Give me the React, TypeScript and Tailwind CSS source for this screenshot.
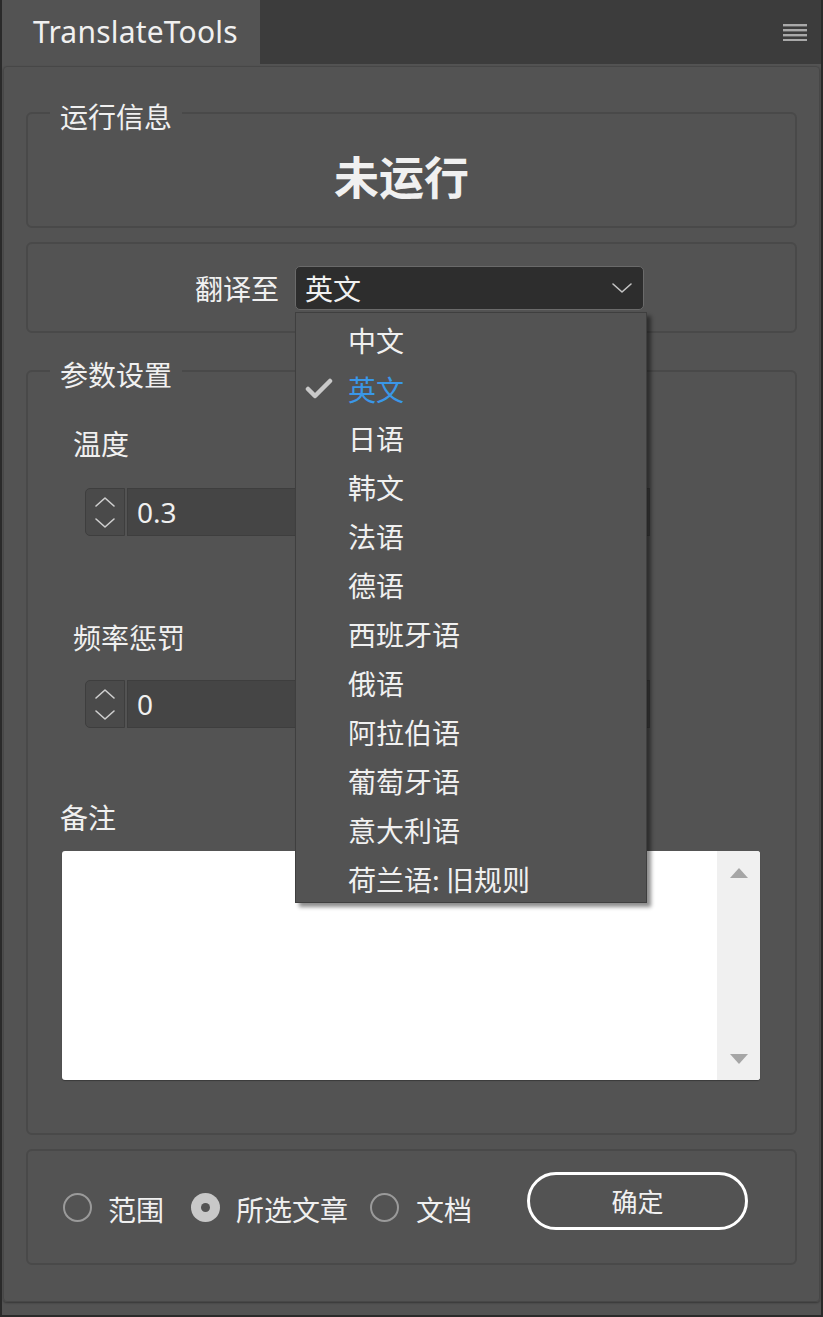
import React from "react"

const languages = [
  "中文",
  "英文",
  "日语",
  "韩文",
  "法语",
  "德语",
  "西班牙语",
  "俄语",
  "阿拉伯语",
  "葡萄牙语",
  "意大利语",
  "荷兰语: 旧规则",
]

function Chevron({ up = false }: { up?: boolean }) {
  return (
    <svg width="22" height="12" viewBox="0 0 22 12" fill="none">
      <path
        d={up ? "M2 10 L11 2 L20 10" : "M2 2 L11 10 L20 2"}
        stroke="#cfcfcf"
        strokeWidth="1.6"
        strokeLinecap="round"
        strokeLinejoin="round"
      />
    </svg>
  )
}

function Spinner({ value }: { value: string }) {
  return (
    <div className="flex h-[48px] ml-[25px]">
      <div className="w-[40px] flex flex-col items-center justify-center gap-[9px] bg-[#4a4a4a] border border-[#3e3e3e] rounded-l-[5px]">
        <Chevron up />
        <Chevron />
      </div>
      <div className="ml-[2px] w-[523px] flex items-center pl-[9px] bg-[#454545] border border-[#3e3e3e] text-[28px] leading-none font-['Noto_Sans','Noto_Sans_CJK_SC',sans-serif]">
        {value}
      </div>
    </div>
  )
}

function Radio({ checked = false }: { checked?: boolean }) {
  return checked ? (
    <span className="shrink-0 w-[29px] h-[29px] rounded-full bg-[#c8c8c8] flex items-center justify-center">
      <span className="w-[9px] h-[9px] rounded-full bg-[#535353]" />
    </span>
  ) : (
    <span className="shrink-0 block w-[29px] h-[29px] rounded-full border-2 border-[#9a9a9a]" />
  )
}

function Legend({ children, className = "" }: { children: React.ReactNode; className?: string }) {
  return (
    <legend className={`px-[10px] text-[28px] leading-[28px] ${className}`}>
      <span className="relative top-[3px]">{children}</span>
    </legend>
  )
}

export default function App() {
  return (
    <div className="w-[823px] h-[1317px] bg-[#535353] border-x-2 border-b-2 border-[#2a2a2a] flex flex-col overflow-hidden text-[#f0f0f0] font-['Noto_Sans_CJK_SC','Noto_Sans',sans-serif]">
      {/* header */}
      <div className="h-[64px] flex bg-[#3c3c3c] shrink-0">
        <div className="w-[258px] bg-[#535353] flex items-center pl-[31px] text-[30px] tracking-[0.2px] leading-none font-['Noto_Sans',sans-serif]">
          TranslateTools
        </div>
        <div className="flex-1 flex justify-end items-center pr-[14px]">
          <svg width="24" height="18" viewBox="0 0 24 18">
            <rect x="0" y="1" width="24" height="2.4" fill="#a9a9a9" />
            <rect x="0" y="6" width="24" height="2.4" fill="#a9a9a9" />
            <rect x="0" y="11" width="24" height="2.4" fill="#a9a9a9" />
            <rect x="0" y="16" width="24" height="2" fill="#a9a9a9" />
          </svg>
        </div>
      </div>

      {/* panel */}
      <div className="mt-[2px] mx-[1px] h-[1236px] border border-[#474747] rounded-[4px] px-[22px] pt-[32px] shadow-[0_1px_2px_rgba(0,0,0,0.35)]">
        {/* 运行信息 */}
        <fieldset className="border-2 border-[#494949] rounded-[6px]">
          <Legend className="ml-[22px]">运行信息</Legend>
          <div className="h-[99px] flex items-center justify-center pb-[2px] pr-[20px]">
            <span className="text-[45px] font-bold leading-none">未运行</span>
          </div>
        </fieldset>

        {/* 翻译至 */}
        <div className="mt-[14px] h-[91px] border-2 border-[#494949] rounded-[6px] flex items-center pl-[167px]">
          <span className="text-[28px] leading-none">翻译至</span>
          <div className="relative ml-[16px] w-[349px] h-[44px]">
            <div className="h-full flex items-center justify-between pl-[9px] pr-[10px] bg-[#2d2d2d] border border-[#6a6a6a] rounded-[5px]">
              <span className="text-[28px] leading-none">英文</span>
              <svg width="22" height="12" viewBox="0 0 22 12" fill="none">
                <path d="M2 2 L11 10 L20 2" stroke="#c4c4c4" strokeWidth="1.6" strokeLinecap="round" strokeLinejoin="round" />
              </svg>
            </div>

            {/* open menu */}
            <div className="absolute z-10 top-[46px] left-0 w-[352px] h-[591px] pt-[3px] bg-[#535353] border border-[#3f3f3f] shadow-[4px_4px_4px_rgba(0,0,0,0.45)]">
              {languages.map((lang) => (
                <div key={lang} className="h-[49px] flex items-center">
                  <div className="w-[52px] flex justify-center pr-[6px]">
                    {lang === "英文" && (
                      <svg width="28" height="22" viewBox="0 0 28 22" fill="none">
                        <path d="M3 11 L10 18 L25 3" stroke="#c9c9c9" strokeWidth="4.5" strokeLinecap="round" strokeLinejoin="round" />
                      </svg>
                    )}
                  </div>
                  <span className={`text-[28px] leading-none ${lang === "英文" ? "text-[#3a97e8]" : "text-[#f0f0f0]"}`}>
                    {lang}
                  </span>
                </div>
              ))}
            </div>
          </div>
        </div>

        {/* 参数设置 */}
        <fieldset className="mt-[24px] border-2 border-[#494949] rounded-[6px] pl-[32px] pb-[53px]">
          <Legend className="ml-[-10px]">参数设置</Legend>
          <div className="mt-[44px] ml-[13px] text-[28px] leading-[28px]">温度</div>
          <div className="mt-[31px]">
            <Spinner value="0.3" />
          </div>
          <div className="mt-[87px] ml-[13px] text-[28px] leading-[28px]">频率惩罚</div>
          <div className="mt-[29px]">
            <Spinner value="0" />
          </div>
          <div className="mt-[75px] text-[28px] leading-[28px]">备注</div>
          <div className="mt-[20px] ml-[2px] w-[698px] h-[229px] bg-white rounded-[3px] flex overflow-hidden shadow-[0_1px_1px_rgba(0,0,0,0.3)]">
            <div className="flex-1" />
            <div className="w-[43px] bg-[#f0f0f0] flex flex-col items-center justify-between pt-[16px] pb-[15px]">
              <svg width="20" height="12" viewBox="0 0 20 12">
                <path d="M10 1 L19 11 L1 11 Z" fill="#a6a6a6" />
              </svg>
              <svg width="20" height="12" viewBox="0 0 20 12">
                <path d="M1 1 L19 1 L10 11 Z" fill="#a6a6a6" />
              </svg>
            </div>
          </div>
        </fieldset>

        {/* 范围 */}
        <div className="mt-[14px] h-[116px] border-2 border-[#494949] rounded-[6px] flex items-center pl-[35px]">
          <Radio />
          <span className="ml-[16px] mt-[4px] text-[28px] leading-none">范围</span>
          <div className="ml-[27px] flex">
            <Radio checked />
          </div>
          <span className="ml-[16px] mt-[4px] text-[28px] leading-none">所选文章</span>
          <div className="ml-[22px] flex">
            <Radio />
          </div>
          <span className="ml-[17px] mt-[4px] text-[28px] leading-none">文档</span>
          <button className="ml-[55px] mb-[12px] w-[221px] h-[58px] border-[3px] border-white rounded-full text-[26px] leading-none text-[#f0f0f0]">
            确定
          </button>
        </div>
      </div>
    </div>
  )
}
